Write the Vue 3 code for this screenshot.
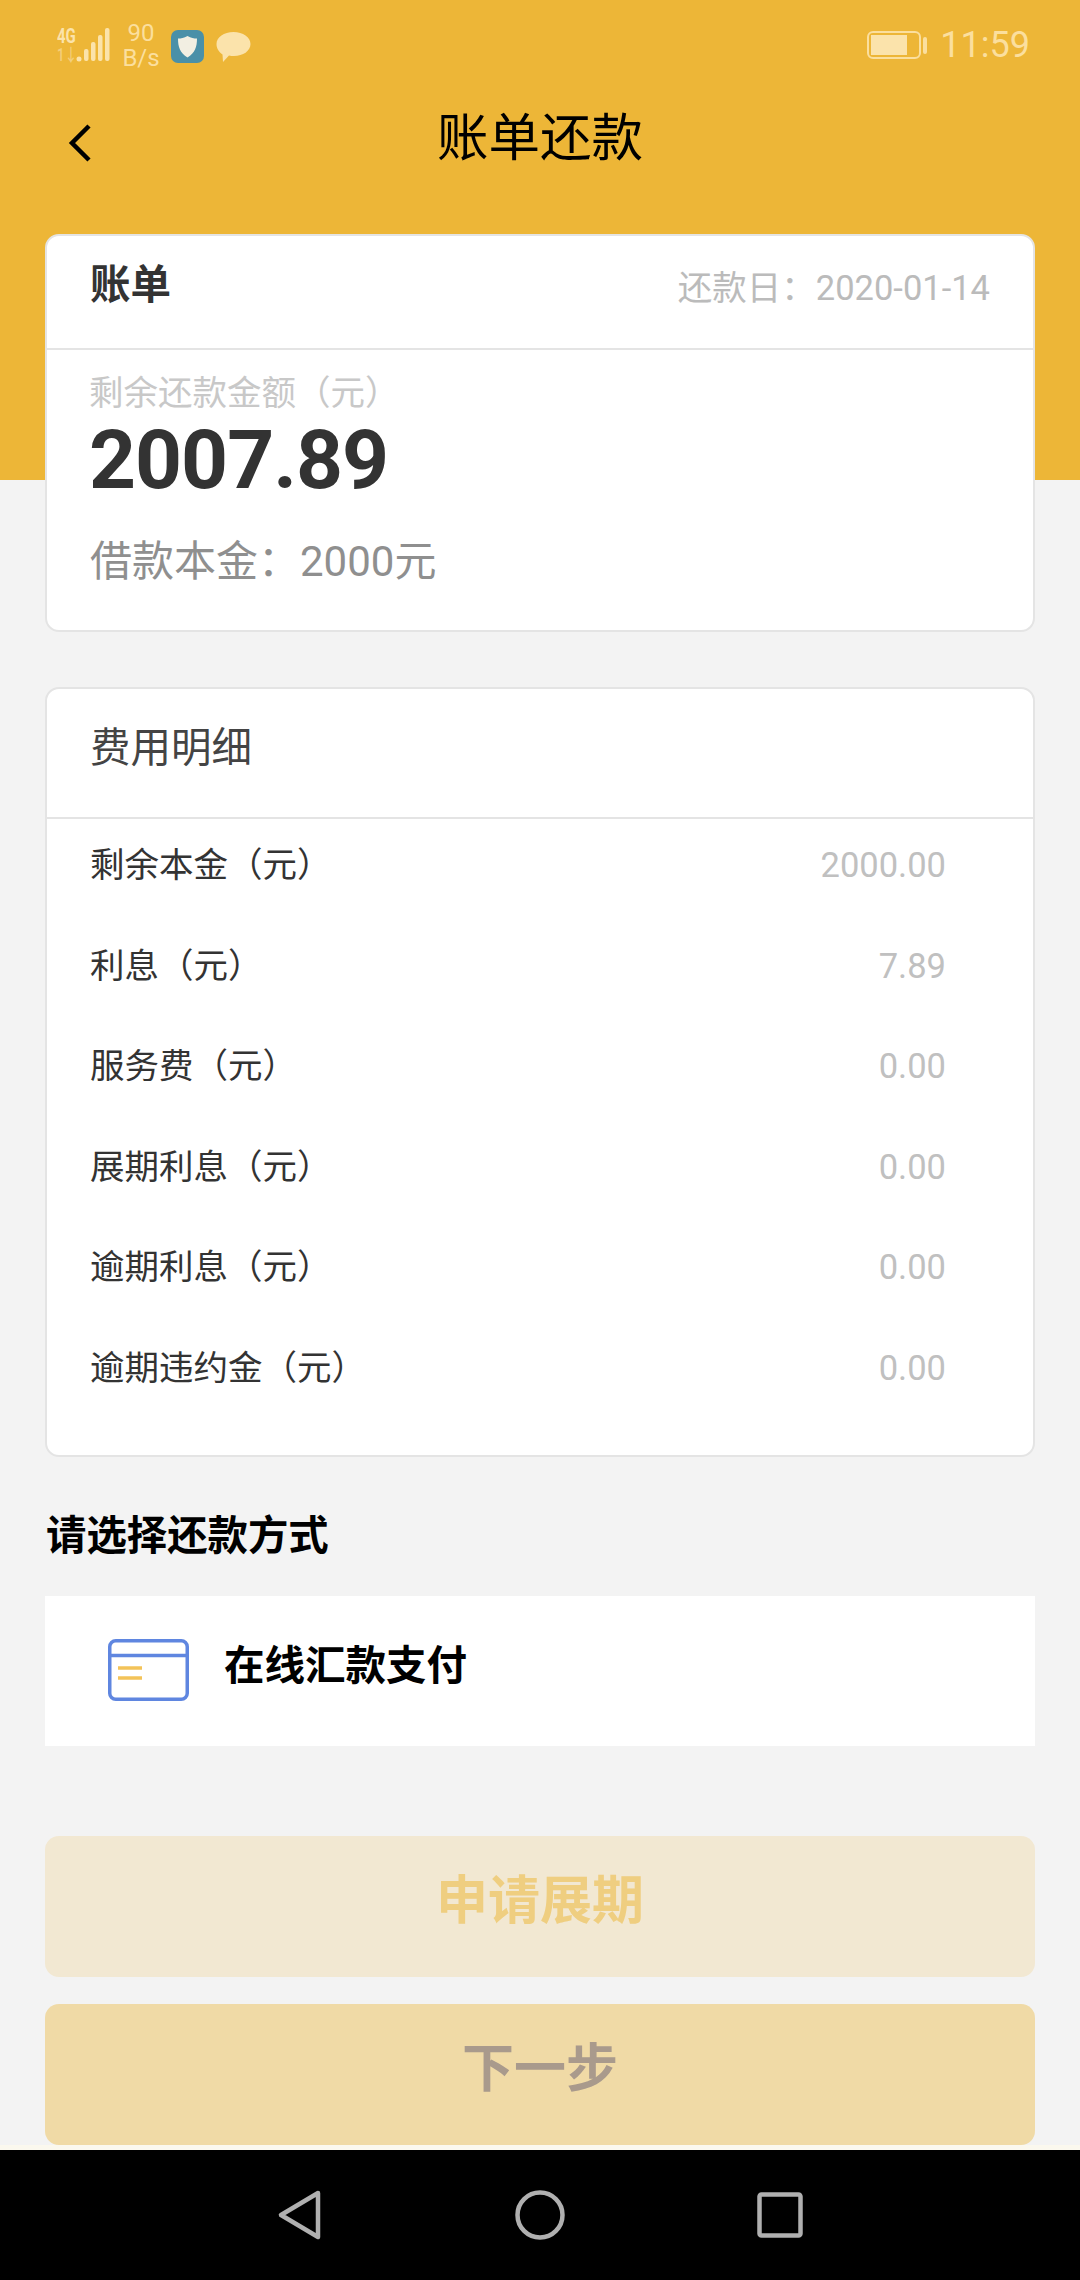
<script setup>
const rows = [
  { label: '剩余本金（元）', value: '2000.00' },
  { label: '利息（元）', value: '7.89' },
  { label: '服务费（元）', value: '0.00' },
  { label: '展期利息（元）', value: '0.00' },
  { label: '逾期利息（元）', value: '0.00' },
  { label: '逾期违约金（元）', value: '0.00' },
]
</script>

<template>
  <div class="page">
    <div class="status">
      <div class="status-left">
        <div class="net">
          <span>4G</span>
          <span class="dim">1↓</span>
        </div>
        <svg class="signal" width="36" height="36" viewBox="18 0 36 36">
          <circle cx="21" cy="31" r="2.500" fill="#fbe3ab" />
          <rect x="26" y="21" width="4.500" height="12" rx="2" fill="#fbe3ab" />
          <rect x="33" y="14" width="4.500" height="19" rx="2" fill="#fbe3ab" />
          <rect x="40" y="7" width="4.500" height="26" rx="2" fill="#fbe3ab" />
          <rect x="47" y="0" width="4.500" height="33" rx="2" fill="#fbe3ab" />
        </svg>
        <div class="speed"><span>90</span><span>B/s</span></div>
        <svg class="shield" width="33" height="33" viewBox="0 0 33 33">
          <rect width="33" height="33" rx="7" fill="#4a90a8" />
          <path d="M16.500 6 C20 8 23 8.500 26 8.500 C26 17 24 23 16.500 27.500 C9 23 7 17 7 8.500 C10 8.500 13 8 16.500 6Z" fill="#f2efe2" />
        </svg>
        <svg class="bubble" width="35" height="33" viewBox="0 0 35 33">
          <path d="M17.500 2 C27 2 34.500 7 34.500 14 C34.500 21 27 26 18 26 C16 26 14.500 26 13 25.500 L7 32 L6.500 24.500 C3 22 .5 18.500 .5 14 C.5 7 8 2 17.500 2Z" fill="#fbe3ab" />
        </svg>
      </div>
      <div class="status-right">
        <svg width="60" height="28" viewBox="0 0 60 28">
          <rect x="1" y="1" width="52" height="26" rx="5" fill="none" stroke="#fbdf9e" stroke-width="2" />
          <rect x="4" y="4" width="36" height="20" fill="#fbe3ab" />
          <rect x="56" y="6" width="4" height="17" rx="2" fill="#fbdf9e" />
        </svg>
        <span class="time">11:59</span>
      </div>
    </div>

    <header class="nav">
      <svg class="back" width="24" height="38" viewBox="0 0 24 38">
        <path d="M21 2 L4 19 L21 36" fill="none" stroke="#000" stroke-width="4.500" />
      </svg>
      <h1 class="title">账单还款</h1>
    </header>

    <section class="card bill">
      <div class="bill-head">
        <span class="bill-title">账单</span>
        <span class="bill-date">还款日：2020-01-14</span>
      </div>
      <div class="bill-body">
        <div class="remain-label">剩余还款金额（元）</div>
        <div class="amount">2007.89</div>
        <div class="principal">借款本金：2000元</div>
      </div>
    </section>

    <section class="card detail">
      <div class="detail-head">费用明细</div>
      <div class="detail-rows">
        <div v-for="row in rows" :key="row.label" class="row">
          <span class="row-label">{{ row.label }}</span>
          <span class="row-value">{{ row.value }}</span>
        </div>
      </div>
    </section>

    <h2 class="method-title">请选择还款方式</h2>

    <div class="method">
      <svg width="81" height="62" viewBox="0 0 81 62">
        <rect x="1.750" y="1.750" width="77.500" height="58.500" rx="6" fill="none" stroke="#5f86e0" stroke-width="3.500" />
        <path d="M1.750 16.500 H79.250" stroke="#5f86e0" stroke-width="3.500" />
        <path d="M10 29 H34 M10 39 H34" stroke="#f3c359" stroke-width="3.500" />
      </svg>
      <span class="method-name">在线汇款支付</span>
    </div>

    <button class="btn btn-extend">申请展期</button>
    <button class="btn btn-next">下一步</button>

    <div class="strip"></div>
    <footer class="sysnav">
      <svg width="46" height="52" viewBox="0 0 46 52">
        <path d="M41 4 L4 26 L41 48Z" fill="none" stroke="#b0b0b0" stroke-width="4.500" stroke-linejoin="round" />
      </svg>
      <svg width="50" height="50" viewBox="0 0 50 50">
        <circle cx="25" cy="25" r="22.500" fill="none" stroke="#b0b0b0" stroke-width="4.500" />
      </svg>
      <svg width="46" height="46" viewBox="0 0 46 46">
        <rect x="2.500" y="2.500" width="41" height="41" rx="2" fill="none" stroke="#b0b0b0" stroke-width="4.500" />
      </svg>
    </footer>
  </div>
</template>

<style scoped>
.page {
  width: 1080px;
  height: 2280px;
  overflow: hidden;
  display: flex;
  flex-direction: column;
  background: linear-gradient(#edb637 480px, #f3f3f3 480px);
  font-family: Roboto, "Noto Sans CJK SC", sans-serif;
}
.status {
  height: 92px;
  padding: 0 50px 0 57px;
  display: flex;
  justify-content: space-between;
  align-items: flex-start;
}
.status-left {
  display: flex;
  align-items: flex-start;
  padding-top: 28px;
}
.net {
  width: 19px;
  display: flex;
  flex-direction: column;
  font-size: 15px;
  font-weight: 700;
  line-height: 12px;
  padding-top: 2px;
  color: #fbe3ab;
}
.net span {
  transform: scaleY(1.350);
  white-space: nowrap;
}
.net .dim {
  margin-top: 8px;
  font-size: 13px;
  font-weight: 500;
  color: #f4cf7c;
}
.speed {
  margin: -7px 0 0 10px;
  width: 38px;
  display: flex;
  flex-direction: column;
  align-items: center;
  color: #fbdf9e;
  font-size: 24px;
  line-height: 25px;
}
.shield {
  margin: 2px 0 0 11px;
}
.bubble {
  margin: 2px 0 0 12px;
}
.status-right {
  padding-top: 31px;
  display: flex;
  align-items: center;
  gap: 13px;
  height: 28px;
}
.time {
  color: #fbdf9e;
  font-size: 36px;
  line-height: 28px;
}
.nav {
  height: 142px;
  position: relative;
  display: flex;
  align-items: center;
  justify-content: center;
  padding-bottom: 58px;
  box-sizing: border-box;
}
.back {
  position: absolute;
  left: 68px;
  top: 32px;
}
.title {
  margin: 0;
  font-size: 51.500px;
  font-weight: 400;
  color: #000;
  line-height: 72px;
  font-family: "Noto Sans CJK SC", sans-serif;
}
.card {
  margin: 0 45px;
  box-sizing: border-box;
  background: #fff;
  border: 2px solid #e4e4e4;
  border-radius: 14px;
}
.bill {
  height: 398px;
}
.bill-head {
  height: 114px;
  box-sizing: border-box;
  border-bottom: 2px solid #e4e4e4;
  padding: 0 43px;
  display: flex;
  justify-content: space-between;
  align-items: flex-start;
}
.bill-title {
  font-size: 40.500px;
  font-weight: 700;
  color: #333;
  line-height: 58px;
  margin-top: 20px;
}
.bill-date {
  font-size: 34.500px;
  color: #bbb;
  line-height: 50px;
  margin-top: 27px;
}
.bill-body {
  padding: 18px 0 0 43px;
}
.remain-label {
  font-size: 34.500px;
  color: #c8c8c8;
  line-height: 50px;
  margin-left: -1px;
}
.amount {
  font-size: 82px;
  letter-spacing: -1px;
  font-weight: 700;
  color: #333;
  line-height: 84px;
  margin: 0 0 0 -1px;
}
.principal {
  font-size: 42px;
  color: #8f8f8f;
  line-height: 60px;
  margin-top: 30px;
}
.detail {
  margin-top: 55px;
  height: 770px;
}
.detail-head {
  height: 130px;
  box-sizing: border-box;
  border-bottom: 2px solid #e4e4e4;
  padding-left: 43px;
  font-size: 40.500px;
  color: #444;
  line-height: 118px;
}
.detail-rows {
  padding: 0 87px 0 43px;
  display: flex;
  flex-direction: column;
  gap: 8.600px;
}
.row {
  height: 92px;
  display: flex;
  justify-content: space-between;
  align-items: center;
}
.row-label {
  font-size: 34.500px;
  color: #333;
  margin-bottom: 6px;
}
.row-value {
  font-size: 34.500px;
  color: #c0c0c0;
}
.method-title {
  margin: 47px 0 0 46px;
  font-size: 40.400px;
  font-weight: 700;
  color: #000;
  line-height: 58px;
  font-family: "Noto Sans CJK SC", sans-serif;
}
.method {
  margin: 34px 45px 0;
  height: 150px;
  background: #fff;
  display: flex;
  align-items: center;
  padding-left: 63px;
  gap: 35px;
}
.method svg {
  margin-bottom: 2px;
}
.method-name {
  font-size: 40.500px;
  font-weight: 700;
  color: #000;
  margin-bottom: 18px;
}
.btn {
  margin: 0 45px;
  height: 141px;
  border: none;
  border-radius: 14px;
  font-family: "Noto Sans CJK SC", sans-serif;
  font-size: 52px;
  font-weight: 700;
  padding: 0 0 20px;
}
.btn-extend {
  margin-top: 90px;
  background: #f2e8d2;
  color: #efce80;
}
.btn-next {
  margin-top: 27px;
  background: #f0daa6;
  color: #a99a8c;
}
.strip {
  height: 5px;
  background: #fbf8ee;
}
.sysnav {
  flex: 1;
  background: #000;
  display: flex;
  align-items: center;
  padding-left: 277px;
  gap: 192px;
}
</style>
